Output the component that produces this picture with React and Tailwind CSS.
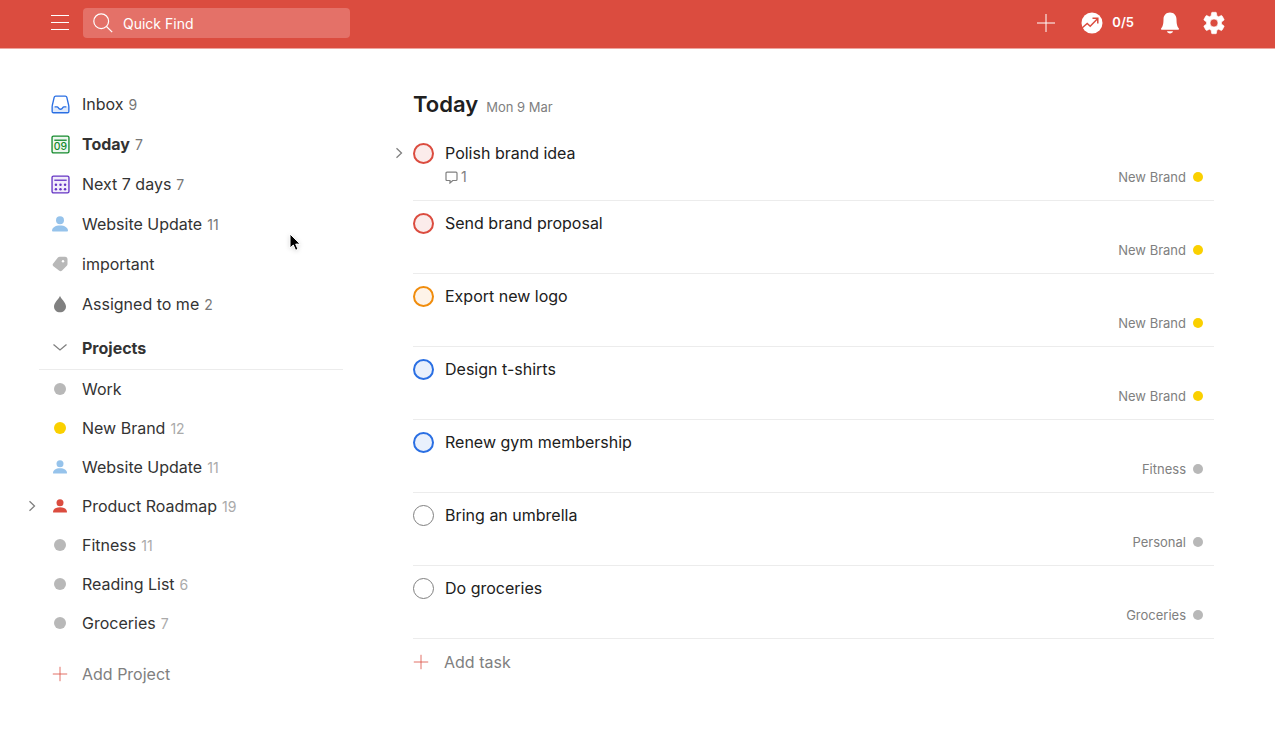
const FILTERS = [
  { name: 'Inbox', count: 9, icon: 'inbox' },
  { name: 'Today', count: 7, icon: 'today', active: true },
  { name: 'Next 7 days', count: 7, icon: 'week' },
  { name: 'Website Update', count: 11, icon: 'person' },
  { name: 'important', icon: 'tag' },
  { name: 'Assigned to me', count: 2, icon: 'drop' },
];

const PROJECTS = [
  { name: 'Work', color: 'bg-[#b8b8b8]' },
  { name: 'New Brand', count: 12, color: 'bg-[#fad000]' },
  { name: 'Website Update', count: 11, person: 'text-[#96c3eb]' },
  { name: 'Product Roadmap', count: 19, person: 'text-[#db4c3f]', expandable: true },
  { name: 'Fitness', count: 11, color: 'bg-[#b8b8b8]' },
  { name: 'Reading List', count: 6, color: 'bg-[#b8b8b8]' },
  { name: 'Groceries', count: 7, color: 'bg-[#b8b8b8]' },
];

const TASKS = [
  { id: 1, title: 'Polish brand idea', project: 'New Brand', priority: 1, comments: 1 },
  { id: 2, title: 'Send brand proposal', project: 'New Brand', priority: 1 },
  { id: 3, title: 'Export new logo', project: 'New Brand', priority: 2 },
  { id: 4, title: 'Design t-shirts', project: 'New Brand', priority: 3 },
  { id: 5, title: 'Renew gym membership', project: 'Fitness', priority: 3 },
  { id: 6, title: 'Bring an umbrella', project: 'Personal', priority: 4 },
  { id: 7, title: 'Do groceries', project: 'Groceries', priority: 4 },
];

const PRIORITY_STYLES = {
  1: 'border-2 border-[#db4c3f] bg-[#fbeceb] checked:bg-[#db4c3f]',
  2: 'border-2 border-[#f08c0c] bg-[#fef3e8] checked:bg-[#f08c0c]',
  3: 'border-2 border-[#2a6fe3] bg-[#e9f0fc] checked:bg-[#2a6fe3]',
  4: 'border border-[#808080] bg-white checked:bg-[#808080]',
};

const PersonIcon = ({ className }) => (
  <svg className={className} viewBox="0 0 18 18" fill="currentColor" aria-hidden="true">
    <circle cx="9" cy="4.800" r="4.500" />
    <path d="M1 17.500c-.6 0-1-.3-1-.9C.2 13 3.600 10.700 9 10.700s8.800 2.300 9 5.900c0 .6-.4.9-1 .9z" />
  </svg>
);

const PlusIcon = ({ className }) => (
  <svg className={className} viewBox="0 0 20 20" stroke="currentColor" aria-hidden="true">
    <path d="M10 1v18M1 10h18" />
  </svg>
);

const Chevron = ({ className }) => (
  <svg className={className} viewBox="0 0 8 12" fill="none" stroke="currentColor" strokeWidth="1.3" aria-hidden="true">
    <path d="M1.500 1.200L6.500 6l-5 4.800" />
  </svg>
);

const FilterIcon = ({ icon }) => {
  if (icon === 'inbox') {
    return (
      <svg className="w-[19px] h-[19px]" viewBox="0 0 20 20" fill="none" stroke="#2a6fe3" strokeWidth="1.400" strokeLinejoin="round">
        <path d="M1.300 12.200h4.500c1.300 0 1.600 2.600 4.200 2.600s2.900-2.600 4.200-2.600h4.500v5.200c0 .8-.4 1.200-1.200 1.200h-15c-.8 0-1.200-.4-1.200-1.200z" fill="#dfeafb" stroke="none" />
        <path d="M4.900 1.100h10.200c.8 0 1.300.4 1.500 1.100l2 8.600c.1.500.2 1 .2 1.500v5c0 .9-.5 1.400-1.400 1.400H2.600c-.9 0-1.400-.5-1.400-1.400v-5c0-.5.1-1 .2-1.500l2-8.600c.2-.7.700-1.100 1.500-1.100z" />
        <path d="M3.800 12.500h2.600c.6 0 .9.300 1.200.8.5.9 1.200 1.700 2.400 1.700s1.900-.8 2.400-1.700c.3-.5.6-.8 1.200-.8h2.600" />
      </svg>
    );
  }
  if (icon === 'today') {
    return (
      <svg className="w-[19px] h-[19px]" viewBox="0 0 20 20" fill="none" stroke="#148a2c" strokeWidth="1.400">
        <rect x="1.100" y="1.100" width="17.800" height="17.800" rx="1.500" fill="#eef7f0" />
        <path d="M3.500 5.500h13" />
        <text x="10" y="16.200" textAnchor="middle" fontSize="11" fontWeight="500" fill="#148a2c" stroke="none">09</text>
      </svg>
    );
  }
  if (icon === 'week') {
    return (
      <svg className="w-[19px] h-[19px]" viewBox="0 0 20 20" fill="#6534c4">
        <rect x="1.100" y="1.100" width="17.800" height="17.800" rx="1.500" fill="#f2edfb" stroke="#6534c4" strokeWidth="1.400" />
        <path d="M3.500 5.500h13" stroke="#6534c4" strokeWidth="1.400" />
        {[5.200, 10, 14.800].map(x => (
          <g key={x}>
            <circle cx={x} cy="10.200" r="1.300" />
            <circle cx={x} cy="15" r="1.300" />
          </g>
        ))}
      </svg>
    );
  }
  if (icon === 'person') return <PersonIcon className="w-4 h-[18px] text-[#96c3eb]" />;
  if (icon === 'tag') {
    return (
      <svg className="w-4 h-4" viewBox="0 0 16 16">
        <path d="M7.800.7h5.200c1.700 0 2.500.9 2.500 2.500v4.900c0 .7-.2 1.200-.7 1.700l-4.700 4.700c-1 1-2.100 1-3.100 0L1.400 10.200c-1-1-1-2 0-3L5.900 1.600C6.400.9 7 .7 7.800.7z" fill="#b8b8b8" />
        <circle cx="11" cy="5.200" r="1.200" fill="#fff" />
      </svg>
    );
  }
  return (
    <svg className="w-4 h-[18px]" viewBox="0 0 16 18">
      <path d="M8 .8c.5 2.800 6 6.500 6 10.700C14 15 11.300 17.300 8 17.300S2 15 2 11.500C2 7.300 7.500 3.600 8 .8z" fill="#808080" />
    </svg>
  );
};

const Header = () => (
  <header className="h-[49px] bg-[#db4c3f] border-b border-[#eea59f] flex items-center justify-between pl-[50px] pr-[49px] pb-[2px] text-white">
    <div className="flex items-center gap-[13px]">
      <button type="button" aria-label="Menu" className="w-5 h-5">
        <svg viewBox="0 0 20 20" stroke="currentColor" strokeWidth="1.200">
          <path d="M1 2.500h18M1 9.500h18M1 16.500h18" />
        </svg>
      </button>
      <div className="w-[267px] h-[30px] rounded-[4px] bg-[#e47168] flex items-center gap-[10px] pl-[10px]">
        <svg className="w-5 h-5 shrink-0" viewBox="0 0 20 20" fill="none" stroke="currentColor" strokeWidth="1.200" aria-hidden="true">
          <circle cx="8.200" cy="8.200" r="7.400" />
          <path d="M13.500 13.500l5.700 5.700" />
        </svg>
        <input
          type="text"
          aria-label="Quick Find"
          placeholder="Quick Find"
          className="flex-1 min-w-0 bg-transparent text-[14px] outline-none placeholder:text-white"
        />
      </div>
    </div>

    <div className="flex items-center">
      <button type="button" aria-label="Add" className="mr-[25px]">
        <PlusIcon className="w-5 h-5" />
      </button>
      <button type="button" className="flex items-center gap-[9px] mr-[26px]">
        <svg className="w-[22px] h-[22px]" viewBox="0 0 22 22" fill="none" aria-hidden="true">
          <circle cx="11" cy="11" r="10.500" fill="#fff" />
          <path d="M1 16l5.200-4.500 3 2.700 7.300-7.400M11.500 6.200h5.300v5.300" stroke="#db4c3f" strokeWidth="1.500" />
        </svg>
        <span className="text-[13px] font-semibold">0/5</span>
      </button>
      <button type="button" aria-label="Notifications" className="mr-[22px]">
        <svg className="w-5 h-[22px]" viewBox="0 0 20 22" fill="currentColor">
          <path d="M10 .6c4 0 6.400 2.900 6.500 6.600.1 4.800.6 7 2.200 9.100.6.8.4 1.400-.5 1.400H1.800c-.9 0-1.100-.6-.5-1.400 1.600-2.100 2.100-4.300 2.200-9.100C3.600 3.500 6 .6 10 .6z" />
          <path d="M7 19.200h6c-.3 1.400-1.500 2.200-3 2.200s-2.700-.8-3-2.200z" />
        </svg>
      </button>
      <button type="button" aria-label="Settings">
        <svg className="w-[24px] h-[24px]" viewBox="0 0 24 24" fill="currentColor" stroke="currentColor" strokeWidth=".6" strokeLinejoin="round">
          <path d="M19.430 12.980c.04-.32.070-.64.070-.98s-.03-.66-.07-.98l2.400-1.750c.3-.24.37-.6.2-.94l-1.900-3.400c-.2-.35-.55-.47-.9-.34l-2.700 1.160c-.5-.4-1.080-.73-1.690-.98l-.4-2.900c-.06-.35-.35-.57-.7-.57h-3.480c-.35 0-.64.220-.7.570l-.4 2.900c-.61.250-1.170.590-1.690.980l-2.700-1.160c-.35-.13-.7 0-.9.340l-1.900 3.400c-.17.340-.1.700.2.940l2.400 1.750c-.04.320-.07.650-.07.980s.03.660.07.980l-2.400 1.750c-.3.240-.37.600-.2.940l1.900 3.400c.2.350.55.470.9.340l2.700-1.160c.5.400 1.080.730 1.690.980l.4 2.900c.06.350.35.570.7.570h3.480c.35 0 .64-.22.700-.57l.4-2.900c.61-.25 1.170-.59 1.690-.98l2.700 1.160c.35.130.7 0 .9-.34l1.900-3.400c.17-.34.1-.7-.2-.94zM12 16a4 4 0 1 1 0-8 4 4 0 0 1 0 8z" />
        </svg>
      </button>
    </div>
  </header>
);

const Sidebar = () => (
  <aside className="w-[343px] shrink-0 pt-[35px] text-[#333] text-[16px]">
    <nav aria-label="Filters">
      {FILTERS.map(item => (
        <a key={item.name} href="#" className="h-10 pl-[50px] flex items-center gap-3">
          <span className="w-5 flex justify-center">
            <FilterIcon icon={item.icon} />
          </span>
          <span className="flex items-baseline gap-[5px]">
            <span className={item.active ? 'font-bold' : ''}>{item.name}</span>
            {item.count && <span className="text-[14px] text-[#777]">{item.count}</span>}
          </span>
        </a>
      ))}
    </nav>

    <div className="ml-[39px] h-[46px] border-b border-[#ececec] pl-[11px] pt-[2px] flex items-center">
      <button type="button" className="flex items-center gap-3 font-bold">
        <svg className="w-5 h-3 text-[#808080]" viewBox="0 0 20 12" fill="none" stroke="currentColor" strokeWidth="1.300">
          <path d="M3.500 2.500L10 8l6.500-5.500" />
        </svg>
        Projects
      </button>
    </div>

    <nav aria-label="Projects">
      {PROJECTS.map(project => (
        <a key={project.name} href="#" className="h-[39px] pl-[28px] pb-px flex items-center">
          <span className="w-[22px] text-[#808080]">
            {project.expandable && <Chevron className="w-2 h-3" />}
          </span>
          <span className="w-5 mr-3 flex justify-center">
            {project.person
              ? <PersonIcon className={`w-[14px] h-4 ${project.person}`} />
              : <span className={`w-3 h-3 rounded-full ${project.color}`} />}
          </span>
          <span className="flex items-baseline gap-[5px]">
            <span>{project.name}</span>
            {project.count && <span className="text-[14px] text-[#aaa]">{project.count}</span>}
          </span>
        </a>
      ))}
    </nav>

    <button type="button" className="mt-[11px] h-[39px] pl-[50px] flex items-center gap-3 text-[#808080]">
      <span className="w-5 flex justify-center">
        <PlusIcon className="w-4 h-4 text-[#db4c3f]" />
      </span>
      Add Project
    </button>
  </aside>
);

const TaskRow = ({ task }) => {
  const dot = task.project === 'New Brand' ? 'bg-[#fad000]' : 'bg-[#b8b8b8]';

  return (
    <li className={`flex ${task.comments ? 'h-[70px]' : 'h-[73px]'}`}>
      <div className="w-6 shrink-0 pl-[6px] pt-4 text-[#808080]">
        {task.comments && (
          <button type="button" aria-label="Expand task" className="block">
            <Chevron className="w-2 h-3" />
          </button>
        )}
      </div>
      <div className="flex-1 flex flex-col justify-between pt-[10px] pb-[13px] border-b border-[#ececec]">
        <label className="flex items-center gap-[11px] text-[16px] leading-6 text-[#202020]">
          <input
            type="checkbox"
            className={`appearance-none w-[21px] h-[21px] rounded-full ${PRIORITY_STYLES[task.priority]}`}
          />
          {task.title}
        </label>
        <div className="flex items-center justify-between pl-8 pr-[11px] leading-5 text-[#808080]">
          <span className="flex items-center gap-[3px] text-[14px]">
            {task.comments && (
              <>
                <svg className="w-[13px] h-[13px]" viewBox="0 0 13 13" fill="none" stroke="currentColor" strokeWidth="1.200" aria-hidden="true">
                  <path d="M2 1.200h9c.7 0 1 .3 1 1v6.300c0 .7-.3 1-1 1H7.700L5 12V9.500H2c-.7 0-1-.3-1-1V2.200c0-.7.300-1 1-1z" />
                </svg>
                {task.comments}
              </>
            )}
          </span>
          <a href="#" className="flex items-center gap-[7px] text-[13px]">
            {task.project}
            <span className={`w-[10px] h-[10px] rounded-full ${dot}`} />
          </a>
        </div>
      </div>
    </li>
  );
};

const App = () => {
  return (
    <div className="relative min-h-screen bg-white font-['Inter','Liberation_Sans',sans-serif]">
      <Header />

      <div className="flex">
        <Sidebar />

        <main className="flex-1 min-w-0 pl-[46px] pr-[61px] pt-[39px]">
          <div className="pl-6 h-[43px] flex items-baseline gap-2">
            <h1 className="text-[22px] leading-8 font-semibold text-[#202020]">Today</h1>
            <span className="text-[13px] text-[#808080]">Mon 9 Mar</span>
          </div>

          <ul>
            {TASKS.map(task => <TaskRow key={task.id} task={task} />)}
          </ul>

          <button type="button" className="h-[46px] pl-6 flex items-center gap-[15px] text-[16px] text-[#808080]">
            <PlusIcon className="w-4 h-4 text-[#db4c3f]" />
            Add task
          </button>
        </main>
      </div>

      {/* Mouse pointer */}
      <svg className="absolute left-[289px] top-[233px] w-[14px] h-5 drop-shadow-sm pointer-events-none" viewBox="0 0 14 20" aria-hidden="true">
        <path d="M1 1v14l3.300-3 2.300 5.300 2.400-1-2.300-5.200h4.500z" fill="#000" stroke="#fff" />
      </svg>
    </div>
  );
};

export default App;
